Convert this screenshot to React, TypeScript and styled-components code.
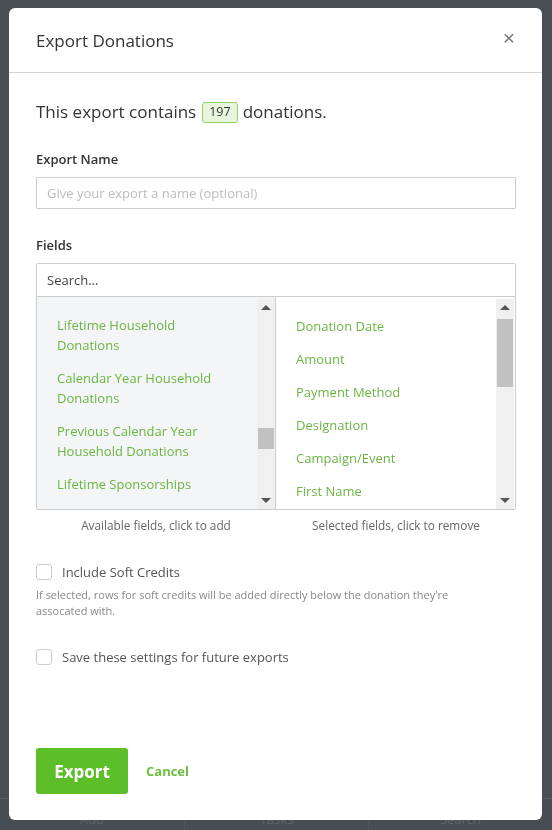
import React from 'react';
import styled, { createGlobalStyle } from 'styled-components';

const GlobalStyle = createGlobalStyle`
  html, body {
    margin: 0;
    padding: 0;
    height: 100%;
  }
  body {
    background: #474e54;
    font-family: 'Open Sans', 'Liberation Sans', Arial, sans-serif;
    color: #333;
  }
  * {
    box-sizing: border-box;
  }
`;

const availableFields = [
  'Lifetime Household Donations',
  'Calendar Year Household Donations',
  'Previous Calendar Year Household Donations',
  'Lifetime Sponsorships',
];

const selectedFields = [
  'Donation Date',
  'Amount',
  'Payment Method',
  'Designation',
  'Campaign/Event',
  'First Name',
];

const navItems = ['Add', 'Tasks', 'Search'];

type ScrollbarProps = {
  thumbTop: number;
  thumbHeight: number;
};

const Scrollbar = ({ thumbTop, thumbHeight }: ScrollbarProps) => (
  <ScrollTrack>
    <ScrollArrow $dir="up" />
    <ThumbArea>
      <Thumb style={{ top: thumbTop, height: thumbHeight }} />
    </ThumbArea>
    <ScrollArrow $dir="down" />
  </ScrollTrack>
);

type CheckRowProps = {
  label: string;
};

const CheckRow = ({ label }: CheckRowProps) => (
  <CheckLabel>
    <CheckBox type="checkbox" />
    <span>{label}</span>
  </CheckLabel>
);

export default function App() {
  return (
    <>
      <GlobalStyle />
      <Backdrop>
        <BottomNav>
          {navItems.map((item) => (
            <NavItem key={item}>{item}</NavItem>
          ))}
        </BottomNav>
      </Backdrop>
      <Overlay>
        <Modal>
          <Header>
            <Title>Export Donations</Title>
            <CloseButton aria-label="Close">×</CloseButton>
          </Header>

          <Body>
            <Summary>
              This export contains <CountBadge>197</CountBadge> donations.
            </Summary>

            <FieldLabel $top={26}>Export Name</FieldLabel>
            <TextInput placeholder="Give your export a name (optional)" />

            <FieldLabel $top={27}>Fields</FieldLabel>
            <Picker>
              <SearchInput placeholder="Search..." />
              <Columns>
                <Panel $muted>
                  <FieldList>
                    {availableFields.map((f) => (
                      <FieldItem key={f}>{f}</FieldItem>
                    ))}
                  </FieldList>
                  <Scrollbar thumbTop={112} thumbHeight={21} />
                </Panel>
                <Panel>
                  <FieldList $shift={1}>
                    {selectedFields.map((f) => (
                      <FieldItem key={f}>{f}</FieldItem>
                    ))}
                  </FieldList>
                  <Scrollbar thumbTop={3} thumbHeight={68} />
                </Panel>
              </Columns>
            </Picker>
            <Captions>
              <Caption>Available fields, click to add</Caption>
              <Caption>Selected fields, click to remove</Caption>
            </Captions>

            <OptionBlock $top={28}>
              <CheckRow label="Include Soft Credits" />
              <HelpText>
                If selected, rows for soft credits will be added directly below
                the donation they're assocated with.
              </HelpText>
            </OptionBlock>

            <OptionBlock $top={28}>
              <CheckRow label="Save these settings for future exports" />
            </OptionBlock>
          </Body>

          <Footer>
            <PrimaryButton>Export</PrimaryButton>
            <LinkButton>Cancel</LinkButton>
          </Footer>
        </Modal>
      </Overlay>
    </>
  );
}

const Backdrop = styled.div`
  height: 100vh;
  display: flex;
  flex-direction: column;
  justify-content: flex-end;
`;

const BottomNav = styled.nav`
  display: grid;
  grid-template-columns: repeat(3, 1fr);
  height: 32px;
  border-top: 1px solid #525a60;
  background: #464d53;
`;

const NavItem = styled.span`
  display: flex;
  align-items: flex-end;
  justify-content: center;
  padding-bottom: 2px;
  font-size: 13px;
  color: #5c656b;
  border-left: 1px solid #50575d;

  &:first-child {
    border-left: none;
  }
`;

const Overlay = styled.div`
  position: fixed;
  inset: 0;
  padding: 8px 10px 10px 9px;
  display: flex;
`;

const Modal = styled.div`
  flex: 1;
  display: flex;
  flex-direction: column;
  background: #fff;
  border-radius: 6px;
  overflow: hidden;
`;

const Header = styled.header`
  display: flex;
  align-items: center;
  justify-content: space-between;
  height: 65px;
  padding: 0 27px;
  border-bottom: 1px solid #d4d4d4;
`;

const Title = styled.h1`
  margin: 0;
  font-size: 17px;
  font-weight: 400;
  color: #333;
`;

const CloseButton = styled.button`
  border: none;
  background: none;
  padding: 0;
  margin: -6px 0 0 0;
  font-family: 'Liberation Sans', Arial, sans-serif;
  font-size: 21px;
  line-height: 1;
  color: #777;
  cursor: pointer;
`;

const Body = styled.div`
  flex: 1;
  display: flex;
  flex-direction: column;
  padding: 27px 26px 0 27px;
`;

const Summary = styled.p`
  margin: 0;
  display: flex;
  align-items: center;
  gap: 4px;
  font-size: 17px;
  line-height: 24px;
  font-weight: 400;
  color: #333;
`;

const CountBadge = styled.span`
  display: inline-flex;
  align-items: center;
  height: 21px;
  padding: 0 6px;
  margin: 0 1px 0 2px;
  font-size: 12.5px;
  font-weight: 400;
  color: #333;
  background: #e7f6dc;
  border: 1px solid #8fd067;
  border-radius: 3px;
`;

const FieldLabel = styled.label<{ $top: number }>`
  display: block;
  margin-top: ${({ $top }) => $top}px;
  margin-bottom: 9px;
  font-size: 13px;
  line-height: 18px;
  font-weight: 600;
  color: #333;
`;

const TextInput = styled.input`
  width: 100%;
  height: 32px;
  padding: 0 10px;
  border: 1px solid #ccc;
  border-radius: 1px;
  font-family: inherit;
  font-size: 13px;
  color: #333;
  outline: none;

  &::placeholder {
    color: #bdbdbd;
  }
`;

const Picker = styled.div`
  border: 1px solid #ccc;
  border-radius: 2px;
`;

const SearchInput = styled.input`
  display: block;
  width: 100%;
  height: 33px;
  padding: 0 10px;
  border: none;
  border-bottom: 1px solid #ccc;
  font-family: inherit;
  font-size: 13px;
  color: #333;
  outline: none;

  &::placeholder {
    color: #444;
  }
`;

const Columns = styled.div`
  display: grid;
  grid-template-columns: 1fr 1fr;
  height: 212px;
`;

const Panel = styled.div<{ $muted?: boolean }>`
  display: flex;
  min-width: 0;
  overflow: hidden;
  background: ${({ $muted }) => ($muted ? '#f3f5f6' : '#fff')};
  border-left: ${({ $muted }) => ($muted ? 'none' : '1px solid #ccc')};
  margin-left: ${({ $muted }) => ($muted ? '0' : '-1px')};
  padding: 2px 1px 0 0;
`;

const FieldList = styled.ul<{ $shift?: number }>`
  flex: 1;
  margin: 0;
  padding: ${({ $shift = 0 }) => 10 + $shift}px 0 0;
  list-style: none;
  overflow: hidden;
`;

const FieldItem = styled.li`
  padding: 6px 20px 7px 20px;
  font-size: 13px;
  line-height: 20px;
  color: #6db543;
  cursor: pointer;
`;

const ScrollTrack = styled.div`
  display: flex;
  flex-direction: column;
  width: 18px;
  flex-shrink: 0;
  background: #f0f0f0;
`;

const ScrollArrow = styled.div<{ $dir: 'up' | 'down' }>`
  height: 17px;
  display: flex;
  align-items: center;
  justify-content: center;

  &::after {
    content: '';
    border-left: 5px solid transparent;
    border-right: 5px solid transparent;
    ${({ $dir }) =>
      $dir === 'up'
        ? 'border-bottom: 5px solid #555;'
        : 'border-top: 5px solid #555;'}
  }
`;

const ThumbArea = styled.div`
  flex: 1;
  position: relative;
`;

const Thumb = styled.div`
  position: absolute;
  left: 1px;
  right: 1px;
  background: #c1c1c1;
`;

const Captions = styled.div`
  display: grid;
  grid-template-columns: 1fr 1fr;
  margin-top: 6px;
`;

const Caption = styled.span`
  text-align: center;
  font-size: 11.8px;
  line-height: 18px;
  color: #666;
`;

const OptionBlock = styled.div<{ $top: number }>`
  margin-top: ${({ $top }) => $top}px;
`;

const CheckLabel = styled.label`
  display: flex;
  align-items: center;
  gap: 10px;
  font-size: 13px;
  line-height: 20px;
  color: #555;
  cursor: pointer;
`;

const CheckBox = styled.input`
  appearance: none;
  width: 16px;
  height: 16px;
  margin: 0;
  border: 1px solid #ccc;
  border-radius: 3px;
  background: #fff;
`;

const HelpText = styled.p`
  margin: 5px 0 0;
  max-width: 440px;
  font-size: 11px;
  line-height: 16px;
  color: #888;
`;

const Footer = styled.footer`
  display: flex;
  align-items: center;
  gap: 18px;
  padding: 0 27px 26px;
`;

const PrimaryButton = styled.button`
  width: 92px;
  height: 46px;
  border: none;
  border-radius: 3px;
  background: #5cbf2a;
  font-family: inherit;
  font-size: 17px;
  font-weight: 700;
  color: #fff;
  cursor: pointer;
`;

const LinkButton = styled.button`
  border: none;
  background: none;
  padding: 0;
  font-family: inherit;
  font-size: 13px;
  font-weight: 700;
  color: #6cbf3f;
  cursor: pointer;
`;
